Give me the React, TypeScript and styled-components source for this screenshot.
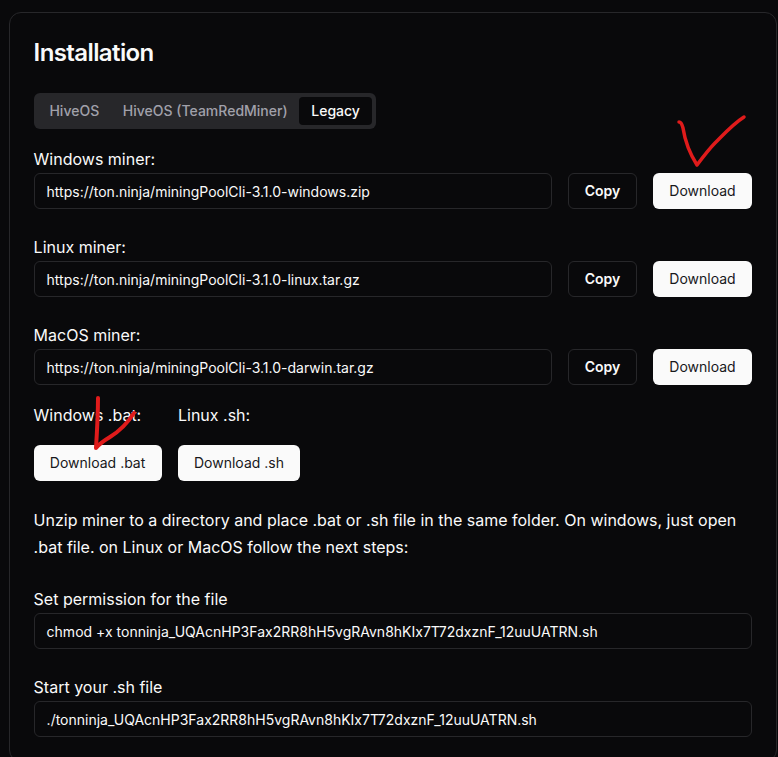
import React from "react";
import styled, { createGlobalStyle } from "styled-components";

const Global = createGlobalStyle`
  html, body { margin: 0; padding: 0; background: #09090b; height: 757px; overflow: hidden; }
  * { box-sizing: border-box; }
  body { font-family: Inter, "Liberation Sans", sans-serif; color: #fafafa; }
`;

const Page = styled.div`
  position: relative;
  width: 778px;
  height: 757px;
  padding: 12px 1px 0 8.6px;
  overflow: hidden;
`;

const Card = styled.section`
  border: 1px solid #27272a;
  border-radius: 12px;
  padding: 24px;
  height: 750px;
`;

const Title = styled.h2`
  margin: 0;
  font-size: 24px;
  line-height: 32px;
  font-weight: 600;
  letter-spacing: -0.6px;
`;

const TabList = styled.div`
  display: inline-flex;
  margin-top: 24px;
  height: 36px;
  padding: 4px;
  background: #27272a;
  border-radius: 6px;
`;

const Tab = styled.div<{ $active?: boolean }>`
  display: flex;
  align-items: center;
  padding: 0 11.85px 1px;
  font-size: 14px;
  font-weight: 500;
  border-radius: 4px;
  color: ${(p) => (p.$active ? "#fafafa" : "#a1a1aa")};
  background: ${(p) => (p.$active ? "#09090b" : "transparent")};
`;

const Block = styled.div<{ $top: number }>`
  margin-top: ${(p) => p.$top}px;
`;

const Label = styled.div`
  font-size: 16px;
  line-height: 24px;
  margin-bottom: 2px;
`;

const Row = styled.div`
  display: flex;
  gap: 16px;
`;

const Field = styled.div`
  flex: 1;
  height: 36px;
  display: flex;
  align-items: center;
  padding: 0 12px;
  border: 1px solid #27272a;
  border-radius: 6px;
  font-size: 14px;
  white-space: nowrap;
`;

const OutlineButton = styled.div`
  width: 69px;
  height: 36px;
  display: flex;
  align-items: center;
  justify-content: center;
  padding-bottom: 1px;
  border: 1px solid #27272a;
  border-radius: 6px;
  font-size: 14px;
  font-weight: 600;
`;

const SolidButton = styled.div<{ $w: number }>`
  width: ${(p) => p.$w}px;
  height: 36px;
  display: flex;
  align-items: center;
  justify-content: center;
  padding-bottom: 1px;
  background: #fafafa;
  color: #18181b;
  border-radius: 6px;
  font-size: 14px;
  font-weight: 400;
`;

const Scripts = styled.div`
  display: flex;
  gap: 16px;
  margin-top: 18px;
`;

const ScriptColumn = styled.div`
  &:last-child {
    margin-left: 0.4px;
  }
`;

const ScriptLabel = styled(Label)`
  margin-bottom: 18px;
`;

const Paragraph = styled.p`
  margin: 26px 0 0;
  font-size: 16px;
  line-height: 27px;
`;

const Tick = styled.svg`
  position: absolute;
  left: 0;
  top: 0;
  pointer-events: none;
`;

const miners = [
  ["Windows miner:", "https://ton.ninja/miningPoolCli-3.1.0-windows.zip"],
  ["Linux miner:", "https://ton.ninja/miningPoolCli-3.1.0-linux.tar.gz"],
  ["MacOS miner:", "https://ton.ninja/miningPoolCli-3.1.0-darwin.tar.gz"],
];

export default function App() {
  return (
    <Page>
      <Global />
      <Card>
        <Title>Installation</Title>
        <TabList>
          <Tab>HiveOS</Tab>
          <Tab>HiveOS (TeamRedMiner)</Tab>
          <Tab $active>Legacy</Tab>
        </TabList>
        {miners.map(([label, url], i) => (
          <Block key={label} $top={i === 0 ? 18 : 26}>
            <Label>{label}</Label>
            <Row>
              <Field>{url}</Field>
              <OutlineButton>Copy</OutlineButton>
              <SolidButton $w={99}>Download</SolidButton>
            </Row>
          </Block>
        ))}
        <Scripts>
          <ScriptColumn>
            <ScriptLabel>Windows .bat:</ScriptLabel>
            <SolidButton $w={128}>Download .bat</SolidButton>
          </ScriptColumn>
          <ScriptColumn>
            <ScriptLabel>Linux .sh:</ScriptLabel>
            <SolidButton $w={122}>Download .sh</SolidButton>
          </ScriptColumn>
        </Scripts>
        <Paragraph>
          Unzip miner to a directory and place .bat or .sh file in the same folder. On windows, just open .bat file. on Linux or MacOS follow the next steps:
        </Paragraph>
        <Block $top={26}>
          <Label>Set permission for the file</Label>
          <Field>chmod +x tonninja_UQAcnHP3Fax2RR8hH5vgRAvn8hKIx7T72dxznF_12uuUATRN.sh</Field>
        </Block>
        <Block $top={26}>
          <Label>Start your .sh file</Label>
          <Field>./tonninja_UQAcnHP3Fax2RR8hH5vgRAvn8hKIx7T72dxznF_12uuUATRN.sh</Field>
        </Block>
      </Card>
      <Tick width="778" height="757" viewBox="0 0 778 757" fill="none" stroke="#e01b1b" strokeLinecap="round" strokeLinejoin="round">
        <path strokeWidth="3.5" d="M679 122 C681 122 682 124 683 128 C685 141 690 154 697 165 C703 157 709 149 715 143 C724 134 733 124 744 117" />
        <path strokeWidth="4" d="M98 398 C98 414 97 432 96 448 C100 443 105 440 110 437 C118 432 127 424 134 413" />
      </Tick>
    </Page>
  );
}
